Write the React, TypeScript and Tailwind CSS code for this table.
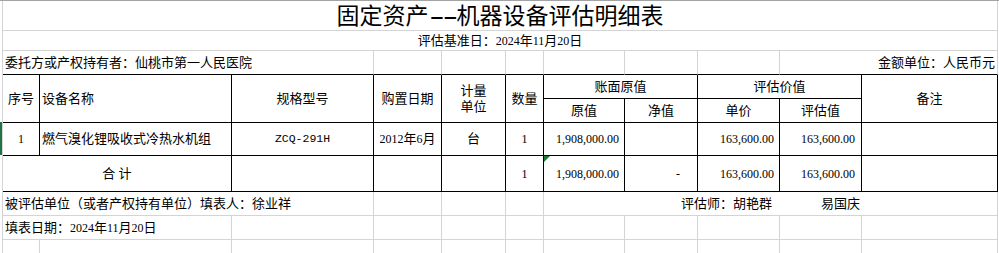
import type { ReactNode } from 'react'

// border colour sets: right / bottom
const GG = 'border-r-[#d4d4d4] border-b-[#d4d4d4]'
const GK = 'border-r-[#d4d4d4] border-b-black'
const KK = 'border-r-black border-b-black'

function Cell({ children, className = '' }: { children?: ReactNode; className?: string }) {
  return (
    <div className={`flex items-center border-r border-b whitespace-nowrap ${className}`}>
      {children}
    </div>
  )
}

function Num({ children }: { children: ReactNode }) {
  return <span className="text-[12px] font-['Liberation_Serif',serif]">{children}</span>
}

export default function App() {
  return (
    <div className="w-[999px] h-[253px] overflow-hidden bg-white border-t border-t-[#a3a3a3] pl-[2px] text-[13px] text-black font-['Liberation_Serif','Noto_Sans_CJK_SC',sans-serif]">
      <div className="grid w-[996px] border-l border-l-[#d4d4d4] grid-cols-[37px_192px_142px_68px_64px_38px_81px_73px_82px_82px_136px] grid-rows-[30px_20px_24px_24px_24px_33px_36px_24px_24px_24px]">
        {/* Title */}
        <Cell className={`col-span-11 justify-center items-end ${GG}`}>
          <span className="text-[23px] leading-[28px] font-['Noto_Sans_CJK_SC',sans-serif]">
            固定资产
            <span className="inline-block w-[28px] text-center">
              <span className="inline-block scale-x-200 tracking-[-1px] font-['Liberation_Sans',sans-serif]">--</span>
            </span>
            机器设备评估明细表
          </span>
        </Cell>
        <Cell className={`col-span-11 justify-center ${GG}`}>
          评估基准日：<Num>2024</Num>年<Num>11</Num>月<Num>20</Num>日
        </Cell>

        {/* Owner line */}
        <Cell className={`col-span-3 pl-[2px] ${GK}`}>委托方或产权持有者：仙桃市第一人民医院</Cell>
        <Cell className={GK} />
        <Cell className={GK} />
        <Cell className={GK} />
        <Cell className={GK} />
        <Cell className={GK} />
        <Cell className={GK} />
        <Cell className={`col-span-2 justify-end pr-[2px] ${GK}`}>金额单位：人民币元</Cell>

        {/* Header */}
        <Cell className={`row-span-2 justify-center ${KK}`}>序号</Cell>
        <Cell className={`row-span-2 pl-[2px] ${KK}`}>设备名称</Cell>
        <Cell className={`row-span-2 justify-center ${KK}`}>规格型号</Cell>
        <Cell className={`row-span-2 justify-center ${KK}`}>购置日期</Cell>
        <Cell className={`row-span-2 flex-col justify-center leading-[16px] ${KK}`}>
          <span>计量</span>
          <span>单位</span>
        </Cell>
        <Cell className={`row-span-2 justify-center ${KK}`}>数量</Cell>
        <Cell className={`col-span-2 justify-center ${KK}`}>账面原值</Cell>
        <Cell className={`col-span-2 justify-center ${KK}`}>评估价值</Cell>
        <Cell className={`row-span-2 justify-center ${KK}`}>备注</Cell>
        <Cell className={`justify-center ${KK}`}>原值</Cell>
        <Cell className={`justify-center ${KK}`}>净值</Cell>
        <Cell className={`justify-center ${KK}`}>单价</Cell>
        <Cell className={`justify-center ${KK}`}>评估值</Cell>

        {/* Item row */}
        <Cell className={`relative justify-center ${KK}`}>
          <div className="absolute -left-[3px] -top-px bottom-0 w-[2px] bg-[#217346]" />
          <Num>1</Num>
        </Cell>
        <Cell className={`pl-[2px] ${KK}`}>燃气溴化锂吸收式冷热水机组</Cell>
        <Cell className={`justify-center ${KK}`}>
          <span className="text-[11.5px] font-['Liberation_Mono',monospace]">ZCQ-291H</span>
        </Cell>
        <Cell className={`justify-center ${KK}`}>
          <Num>2012</Num>年<Num>6</Num>月
        </Cell>
        <Cell className={`justify-center ${KK}`}>台</Cell>
        <Cell className={`justify-center ${KK}`}>
          <Num>1</Num>
        </Cell>
        <Cell className={`justify-end pr-[5px] ${KK}`}>
          <Num>1,908,000.00</Num>
        </Cell>
        <Cell className={KK} />
        <Cell className={`justify-end pr-[5px] ${KK}`}>
          <Num>163,600.00</Num>
        </Cell>
        <Cell className={`justify-end pr-[6px] ${KK}`}>
          <Num>163,600.00</Num>
        </Cell>
        <Cell className={KK} />

        {/* Total row */}
        <Cell className={`col-span-2 justify-center ${KK}`}>合 计</Cell>
        <Cell className={KK} />
        <Cell className={KK} />
        <Cell className={KK} />
        <Cell className={`justify-center ${KK}`}>
          <Num>1</Num>
        </Cell>
        <Cell className={`relative justify-end pr-[5px] ${KK}`}>
          <svg className="absolute left-0 top-0" width="6" height="6" viewBox="0 0 6 6">
            <polygon points="0,0 6,0 0,6" fill="#1e7b34" />
          </svg>
          <Num>1,908,000.00</Num>
        </Cell>
        <Cell className={`justify-end pr-[17px] ${KK}`}>
          <Num>-</Num>
        </Cell>
        <Cell className={`justify-end pr-[5px] ${KK}`}>
          <Num>163,600.00</Num>
        </Cell>
        <Cell className={`justify-end pr-[6px] ${KK}`}>
          <Num>163,600.00</Num>
        </Cell>
        <Cell className={KK} />

        {/* Signatures */}
        <Cell className={`col-span-3 pl-[2px] ${GG}`}>被评估单位（或者产权持有单位）填表人：徐业祥</Cell>
        <Cell className={GG} />
        <Cell className={GG} />
        <Cell className={GG} />
        <Cell className={`col-span-5 justify-center gap-[49px] ${GG}`}>
          <span>评估师：胡艳群</span>
          <span>易国庆</span>
        </Cell>

        <Cell className={`col-span-2 pl-[2px] ${GG}`}>
          填表日期：<Num>2024</Num>年<Num>11</Num>月<Num>20</Num>日
        </Cell>
        {Array.from({ length: 9 }).map((_, i) => (
          <Cell key={`a${i}`} className={GG} />
        ))}

        {Array.from({ length: 11 }).map((_, i) => (
          <Cell key={`b${i}`} className={GG} />
        ))}
      </div>
    </div>
  )
}
